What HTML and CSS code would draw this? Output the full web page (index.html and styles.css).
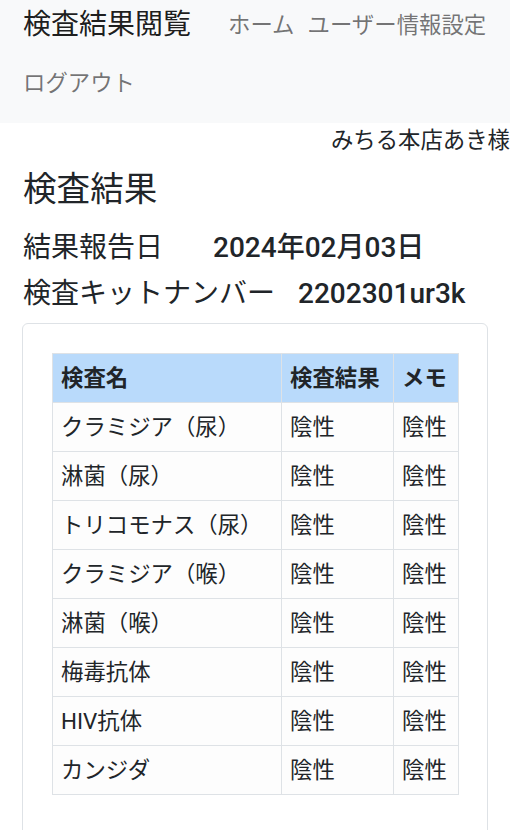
FILE: index.html
```html
<!DOCTYPE html>
<html lang="ja">
<head>
<meta charset="utf-8">
<title>検査結果閲覧</title>
<link rel="stylesheet" href="styles.css">
</head>
<body>
<nav class="navbar">
  <a class="brand" href="#">検査結果閲覧</a>
  <a class="nav-link" href="#">ホーム</a>
  <a class="nav-link" href="#">ユーザー情報設定</a>
  <a class="nav-link" href="#">ログアウト</a>
</nav>
<div class="user-name">みちる本店あき様</div>
<main class="content">
  <h1 class="page-title">検査結果</h1>
  <div class="info-row"><span class="label">結果報告日</span><span class="value value-date">2024年02月03日</span></div>
  <div class="info-row"><span class="label">検査キットナンバー</span><span class="value value-kit">2202301ur3k</span></div>
  <section class="card">
    <table class="result-table">
      <thead>
        <tr><th class="col-name">検査名</th><th class="col-result">検査結果</th><th class="col-memo">メモ</th></tr>
      </thead>
      <tbody>
        <tr><td>クラミジア（尿）</td><td>陰性</td><td>陰性</td></tr>
        <tr><td>淋菌（尿）</td><td>陰性</td><td>陰性</td></tr>
        <tr><td>トリコモナス（尿）</td><td>陰性</td><td>陰性</td></tr>
        <tr><td>クラミジア（喉）</td><td>陰性</td><td>陰性</td></tr>
        <tr><td>淋菌（喉）</td><td>陰性</td><td>陰性</td></tr>
        <tr><td>梅毒抗体</td><td>陰性</td><td>陰性</td></tr>
        <tr><td>HIV抗体</td><td>陰性</td><td>陰性</td></tr>
        <tr><td>カンジダ</td><td>陰性</td><td>陰性</td></tr>
      </tbody>
    </table>
  </section>
</main>
</body>
</html>
```
FILE: styles.css
```css
* { box-sizing: border-box; }
html, body { margin: 0; padding: 0; }
body {
  font-family: Roboto, "Noto Sans CJK JP", sans-serif;
  color: #212529;
  background: #fff;
  font-size: 22.4px;
  width: 510px;
  overflow: hidden;
}
a { text-decoration: none; }

.navbar {
  background: #f8f9fa;
  display: flex;
  flex-wrap: wrap;
  align-items: center;
  row-gap: 8px;
  padding: 0 0 15px 23px;
}
.brand {
  font-size: 28px;
  line-height: 50px;
  color: rgba(0,0,0,.9);
  margin-right: 37px;
}
.nav-link {
  font-size: 22.4px;
  line-height: 50px;
  color: rgba(0,0,0,.55);
  margin-right: 13px;
}

.user-name {
  text-align: right;
  line-height: 34px;
  font-size: 22.4px;
}

.content { padding: 0 22px 0 23px; }
.page-title {
  font-size: 33.6px;
  font-weight: 400;
  line-height: 40px;
  margin: 13px 0 15px;
}
.info-row {
  font-size: 28px;
  line-height: 46px;
  white-space: nowrap;
}
.value { font-weight: 500; }
.value-date { margin-left: 50px; }
.value-kit { margin-left: 23px; }

.card {
  margin: 6px 0 0 -1px;
  border: 1px solid #dee2e6;
  border-radius: 6px;
  padding: 29px 28px 60px 29px;
}
.result-table {
  width: 100%;
  border-collapse: collapse;
  font-size: 22.4px;
}
.result-table th,
.result-table td {
  border: 1px solid #dee2e6;
  padding: 8px;
  line-height: 32px;
  text-align: left;
  white-space: nowrap;
}
.result-table th {
  background: #b9dafb;
  font-weight: 700;
}
.result-table td { background: #fdfdfd; }
.col-result { width: 112px; }
.col-memo { width: 65px; }
```
